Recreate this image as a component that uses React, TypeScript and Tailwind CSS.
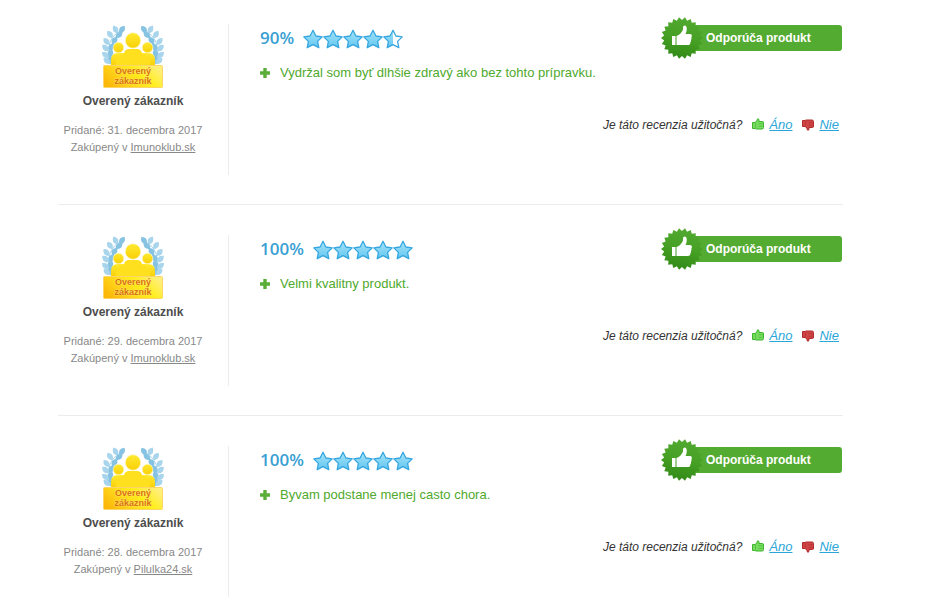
import clsx from 'clsx';

type Review = {
  id: number;
  percent: number;
  added: string;
  shop: string;
  pros: string[];
};

const REVIEWS: Review[] = [
  {
    id: 1,
    percent: 90,
    added: '31. decembra 2017',
    shop: 'Imunoklub.sk',
    pros: ['Vydržal som byť dlhšie zdravý ako bez tohto prípravku.'],
  },
  {
    id: 2,
    percent: 100,
    added: '29. decembra 2017',
    shop: 'Imunoklub.sk',
    pros: ['Velmi kvalitny produkt.'],
  },
  {
    id: 3,
    percent: 100,
    added: '28. decembra 2017',
    shop: 'Pilulka24.sk',
    pros: ['Byvam podstane menej casto chora.'],
  },
];

const STAR = 'M10 1.3 12.9 7 19.2 7.9 14.6 12.4 15.8 18.7 10 15.7 4.2 18.7 5.4 12.4 .8 7.9 7.1 7Z';

// x, y, rotation of the leaves on the left branch
const LEAVES = [
  [20, 5.5, 35],
  [13.5, 5.5, -30],
  [17, 11, 50],
  [8, 10.5, -35],
  [12.5, 16.5, 35],
  [4.5, 17.5, -40],
  [9.5, 23, 30],
  [3.5, 24, -45],
  [8.5, 29.5, 20],
  [3.5, 31, -50],
  [8.5, 36, 5],
  [5, 37, -50],
];

// 22 teeth around a 42px seal
const SEAL_POINTS = Array.from({ length: 44 }, (_, i) => {
  const r = i % 2 ? 18 : 21;
  const a = (i * Math.PI) / 22;
  return `${(21 + r * Math.cos(a)).toFixed(2)},${(21 + r * Math.sin(a)).toFixed(2)}`;
}).join(' ');

function Laurel() {
  return (
    <g>
      <path d="M18 7C9 12 4 22 7 40" fill="none" stroke="#a9d5ec" strokeWidth="1" />
      {LEAVES.map(([x, y, rot], i) => (
        <path
          key={i}
          d="M0 -4.500Q5.500 0 0 4.500Q-5.500 0 0 -4.500Z"
          transform={`translate(${x} ${y}) rotate(${rot})`}
          className={clsx(i % 2 ? 'fill-[#a8d5ec]' : 'fill-[#86c2e1]')}
        />
      ))}
    </g>
  );
}

function CustomerBadge({ id }: { id: number }) {
  const body = `url(#body-${id})`;
  return (
    <svg width="62" height="65" viewBox="0 0 62 65" className="block" aria-hidden="true">
      <defs>
        <linearGradient id={`body-${id}`} x1="0" y1="0" x2="0" y2="1">
          <stop offset="0" stopColor="#ffe92e" />
          <stop offset="1" stopColor="#f9d008" />
        </linearGradient>
        <linearGradient id={`plate-${id}`} x1="0" y1="0.7" x2="1" y2="0.3">
          <stop offset="0" stopColor="#fbb70a" />
          <stop offset="0.4" stopColor="#ffdc1c" />
          <stop offset="0.65" stopColor="#ffee1a" />
          <stop offset="1" stopColor="#ffef7a" />
        </linearGradient>
      </defs>
      <Laurel />
      <g transform="translate(62 0) scale(-1 1)">
        <Laurel />
      </g>
      <path d="M9 42V36Q9 29 16 29H46Q53 29 53 36V42Z" fill={body} />
      <circle cx="16.500" cy="23.500" r="5.300" fill={body} stroke="#fff7c0" strokeWidth=".7" />
      <circle cx="45.500" cy="23.500" r="5.300" fill={body} stroke="#fff7c0" strokeWidth=".7" />
      <path
        d="M14 42V37Q15 31 22 30Q22 26 26 25H36Q40 26 40 30Q47 31 48 37V42Z"
        fill="#ffe01f"
      />
      <circle cx="31" cy="16.500" r="7.700" fill={body} stroke="#fff7c0" strokeWidth=".7" />
      <rect x="1.500" y="41.500" width="59" height="22" rx="1" fill={`url(#plate-${id})`} stroke="#fbd568" />
      <g
        fill="#d9740a"
        stroke="#ffe38a"
        strokeWidth=".6"
        paintOrder="stroke"
        fontFamily="Liberation Sans, sans-serif"
        fontSize="9"
        fontWeight="700"
        textAnchor="middle"
      >
        <text x="31" y="50">Overený</text>
        <text x="31" y="60">zákazník</text>
      </g>
    </svg>
  );
}

function Stars({ id, percent }: { id: number; percent: number }) {
  return (
    <span className="flex" role="img" aria-label={`${percent / 20} z 5`}>
      {[0, 1, 2, 3, 4].map((i) => {
        const fill = Math.min(1, Math.max(0, percent / 20 - i));
        return (
          <svg key={i} width="20" height="22" viewBox="0 -2 20 22">
            <defs>
              <linearGradient id={`star-${id}-${i}`} x1="0" y1="0" x2="0" y2="1">
                <stop offset="0" stopColor="#a6e3f8" />
                <stop offset="1" stopColor="#62c6f0" />
              </linearGradient>
              <clipPath id={`clip-${id}-${i}`}>
                <rect x="0" y="0" width={20 * fill} height="20" />
              </clipPath>
            </defs>
            <path d={STAR} fill="#fff" />
            <path d={STAR} fill={`url(#star-${id}-${i})`} clipPath={`url(#clip-${id}-${i})`} />
            <path d={STAR} fill="none" stroke="#35a6df" strokeWidth="1.300" strokeLinejoin="round" />
          </svg>
        );
      })}
    </span>
  );
}

function Recommends({ id }: { id: number }) {
  return (
    <div className="relative flex h-[26px] w-40 items-center rounded-[3px] bg-[#54ab31] pl-6 text-xs font-bold text-white">
      <svg className="absolute -top-2 -left-[21px]" width="42" height="42" viewBox="0 0 42 42" aria-hidden="true">
        <defs>
          <linearGradient id={`seal-${id}`} x1="0.6" y1="0" x2="0.4" y2="1">
            <stop offset="0" stopColor="#52aa31" />
            <stop offset="0.5" stopColor="#46a024" />
            <stop offset="1" stopColor="#308a17" />
          </linearGradient>
        </defs>
        <polygon points={SEAL_POINTS} fill={`url(#seal-${id})`} />
        <path
          fill="#fff"
          d="M11 19h3.500v9H11ZM15.500 19C18.500 18 21 15.300 22 12.500V10Q22.200 8.500 23.700 8.500Q25.800 8.700 25.800 12Q25.700 14.800 24.500 17H29Q31 17.200 30.900 19Q30.800 20 30.300 20.500Q31 21.700 30 23Q30.400 24.300 29.400 25.200Q29.500 28 27 28H15.500Z"
        />
      </svg>
      Odporúča produkt
    </div>
  );
}

function Plus() {
  return (
    <svg width="10" height="10" viewBox="0 0 10 10" aria-hidden="true">
      <path d="M3.300 0h3.400v3.300H10v3.400H6.700V10H3.300V6.700H0V3.300h3.300Z" fill="#5aae38" />
    </svg>
  );
}

function Thumb({ down }: { down?: boolean }) {
  return (
    <svg
      width="12"
      height="14"
      viewBox="0 0 12 14"
      className={clsx(down ? 'fill-[#cf4545] stroke-[#b02a2c]' : 'fill-[#77dc60] stroke-[#3cb52c]')}
      aria-hidden="true"
    >
      <g transform={down ? 'translate(0 13) scale(1 -1)' : undefined}>
        <path d="M.5 4.500H3L5 3V1.500Q6 0 7 1.500V3.500H10.500Q11.800 3.700 11.500 5V9.500Q11.500 11 10 11H3.500L3 10.500H.5Z" />
        <path d="M3.500 5V10M6.500 5.700H10.500M6.500 8.300H10.500" strokeWidth=".6" fill="none" />
      </g>
    </svg>
  );
}

function ReviewItem({ review }: { review: Review }) {
  const { id, percent, added, shop, pros } = review;
  return (
    <article className="flex border-b border-[#ececec] pt-[30px] pb-[29px] first:pt-6 last:border-b-0 last:pb-0">
      <aside className="flex min-h-[151px] w-[171px] shrink-0 flex-col items-center border-r border-[#ececec] pr-5 text-center text-[11px] leading-[17px] text-[#888]">
        <CustomerBadge id={id} />
        <h3 className="mt-1 text-xs leading-[17px] font-bold text-[#4d4d4d]">Overený zákazník</h3>
        <p className="mt-3">Pridané: {added}</p>
        <p>
          Zakúpený v{' '}
          <a href="#" className="underline">
            {shop}
          </a>
        </p>
      </aside>

      <div className="min-w-0 flex-1 pr-px pl-[31px]">
        <div className="flex h-7 items-center justify-between">
          <div className="flex items-center gap-[9px]">
            <span className="font-['Open_Sans',sans-serif] text-[17px] leading-7 font-semibold text-[#3a9fd3]">
              {percent}%
            </span>
            <Stars id={id} percent={percent} />
          </div>
          <Recommends id={id} />
        </div>

        <ul className="mt-[11px] text-[13px] leading-5 text-[#4fa92c]">
          {pros.map((text) => (
            <li key={text} className="flex items-center gap-[10px]">
              <Plus />
              {text}
            </li>
          ))}
        </ul>

        <div className="mt-8 flex items-center justify-end pr-[3px] text-[13px] leading-5 text-[#333] italic">
          <span className="mr-[10px] text-xs leading-5">Je táto recenzia užitočná?</span>
          <Thumb />
          <a href="#" className="mr-[10px] ml-[5px] text-[#2ba6d8] underline">
            Áno
          </a>
          <Thumb down />
          <a href="#" className="ml-[5px] text-[#2ba6d8] underline">
            Nie
          </a>
        </div>
      </div>
    </article>
  );
}

export default function App() {
  return (
    <main className="bg-white pr-[99px] pl-[58px] font-['Liberation_Sans',Arial,sans-serif]">
      {REVIEWS.map((r) => (
        <ReviewItem key={r.id} review={r} />
      ))}
    </main>
  );
}
